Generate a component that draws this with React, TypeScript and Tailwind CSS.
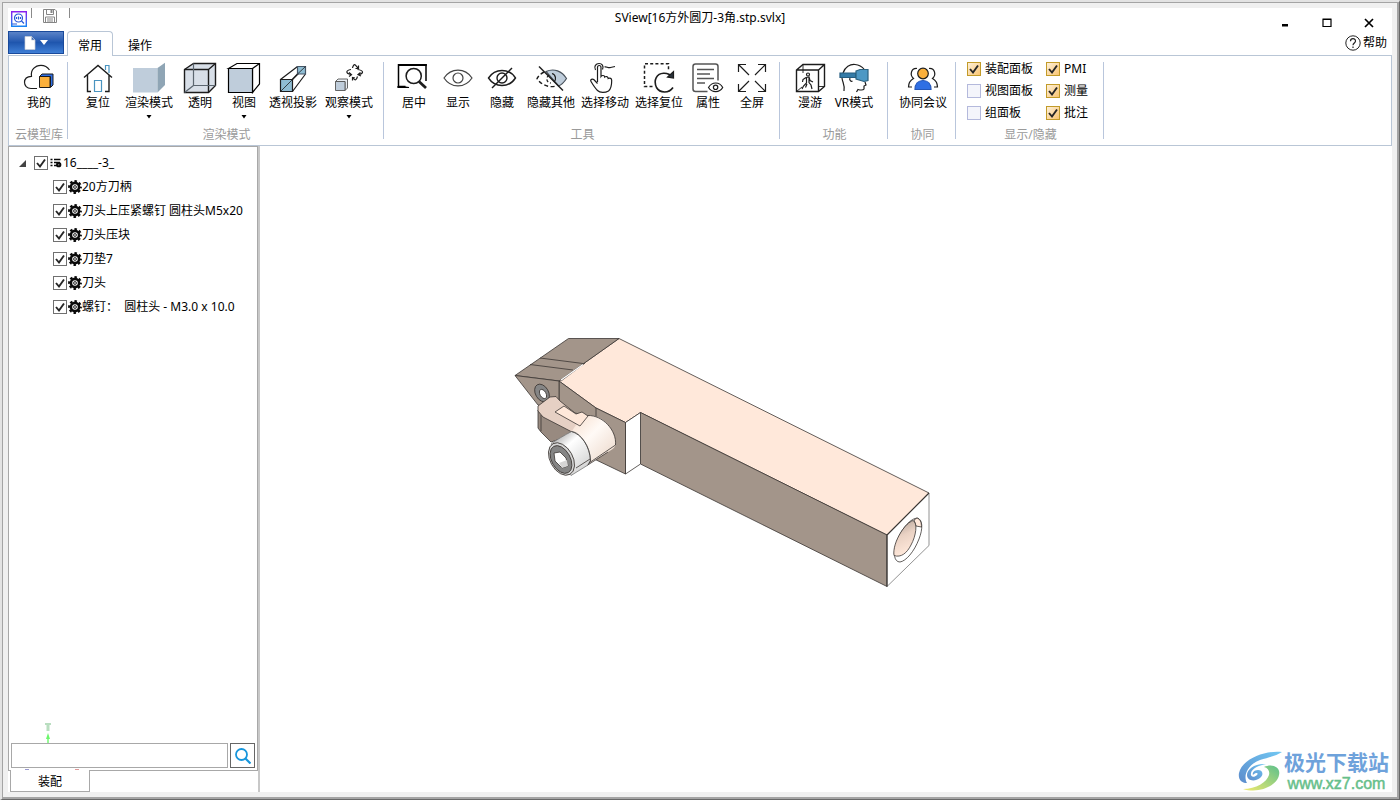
import React from "react";

interface IconProps {
  className?: string;
}

interface ToolItem {
  label: string;
  icon: React.FC;
  width: string;
  menu?: boolean;
}

interface ToolGroup {
  title: string;
  width: string;
  tools: ToolItem[];
}

const NARROW = "w-11";
const WIDE = "w-[54px]";
const WIDER = "w-[58px]";

const Glyph: React.FC<{ children: React.ReactNode }> = ({ children }) => (
  <svg
    viewBox="0 0 32 32"
    className="w-8 h-8 overflow-visible"
    fill="none"
    stroke="#1c1c1c"
    strokeWidth="1.2"
    aria-hidden="true"
  >
    {children}
  </svg>
);

const CloudIcon = () => (
  <Glyph>
    <path d="M14 26.5H8C3.800 26.500 1.500 23.500 1.500 20.300C1.500 16.500 4 14.500 8.500 14.300C7.500 8 12 3.300 18 3.300C21.500 3.300 24.500 5 26.500 8" />
    <path d="M16.500 14.500L19 12H30V23L27.500 25.500V14.500Z" fill="#2f6fe4" strokeWidth="1" />
    <path d="M16.500 14.500H27V25.500H16.500Z" fill="#fbb03b" strokeWidth="1" />
  </Glyph>
);

const HomeIcon = () => (
  <Glyph>
    <path d="M2 15.500L16 3.500L30 15.500M5.500 13V29.500H9M27 13V29.500H23" strokeWidth="1.400" />
    <path d="M12.500 29.500V18.500H19.500V29.500ZM23.500 8V3.500H27V11" stroke="#4a94c0" />
  </Glyph>
);

const ShadeIcon = () => (
  <Glyph>
    <path d="M0 6H24.500V30.500H0Z" fill="#bfcddb" stroke="none" />
    <path d="M24.500 6L32 .700V23L24.500 30.500Z" fill="#8fa5b5" stroke="none" />
  </Glyph>
);

const TransparentIcon = () => (
  <Glyph>
    <path d="M.500 7.500L9.500 1.500H31.500V23.500L24.500 30.500H.500Z" fill="#d8dfe8" strokeWidth="1.400" />
    <path d="M.500 7.500H24.500V30.500M24.500 7.500L31.500 1.500" strokeWidth="1.400" />
    <path d="M9.500 1.500V23.500H31.500M9.500 23.500L.500 30.500" stroke="#5c6670" />
  </Glyph>
);

const ViewCubeIcon = () => (
  <Glyph>
    <path d="M.500 6.500L9 1.500H31.500V22L24.500 30.500V6.500Z" fill="#fff" stroke="#000" />
    <path d="M.500 6.500H24.500V30.500H.500Z" fill="#bfcddb" stroke="#000" />
    <path d="M24.500 6.500L31.500 1.500" stroke="#000" />
  </Glyph>
);

const PerspectiveIcon = () => (
  <Glyph>
    <path d="M3.500 17.500L20.500 4.500M15.500 17.500L28.500 4.500M15.500 29.500L28.500 12M3.500 29.500L20.500 12" />
    <path d="M20.500 4.500H28.500V12H20.500Z" fill="#8fbdd3" stroke="#456" />
    <path d="M3.500 17.500H15.500V29.500H3.500Z" fill="#8fbdd3" />
    <path d="M3.500 29.500L15.500 17.500M20.500 12L28.500 4.500" strokeWidth=".8" />
  </Glyph>
);

const OrbitIcon = () => (
  <Glyph>
    <path d="M2.500 19.500L5 17H14.500V26L12 28.500V19.500Z" fill="#e9eef4" stroke="#555" strokeWidth=".9" />
    <path d="M2.500 19.500H12V28.500H2.500Z" fill="#bfcddb" stroke="#555" strokeWidth=".9" />
    <path d="M18 12.500C12.500 11.500 12.500 8.500 18 7.500M24.500 7.500C31 8.500 31 11.500 25.500 12.500M19.500 6C20 3.500 21 2.300 22 2.700L25 6M24.500 14.500C23.500 18 22 19 20 16" />
    <path d="M16 10.500L18.500 12.700L16 14.500M27.500 10.500L25 12.700L28 14M25.500 3.500V6.500H22.500M19.500 18.500V15.500L22 16" />
  </Glyph>
);

const CenterIcon = () => (
  <Glyph>
    <path d="M.500 2V24.500H7.500M28 2V19" stroke="#000" strokeWidth="1.500" />
    <path d="M0 3H28.700" stroke="#000" strokeWidth="2" />
    <path d="M0 24.500H4L11 25.500H0Z" fill="#000" stroke="#000" />
    <circle cx="15.700" cy="14" r="7.600" strokeWidth="1.500" />
    <path d="M21 19.500L28 26" strokeWidth="2.800" />
  </Glyph>
);

const EyeIcon = () => (
  <Glyph>
    <path d="M2 16C9 5.500 23 5.500 30 16C23 26.500 9 26.500 2 16Z" stroke="#444" />
    <circle cx="16" cy="16" r="5" stroke="#444" />
  </Glyph>
);

const HideIcon = () => (
  <Glyph>
    <path d="M2.500 16C9 6 23 6 29.500 16C23 26 9 26 2.500 16Z" strokeWidth="1.400" />
    <circle cx="16" cy="16" r="5" strokeWidth="1.400" />
    <path d="M6 26L26 6" strokeWidth="1.400" />
  </Glyph>
);

const HideOthersIcon = () => (
  <Glyph>
    <path d="M11 9.500C19 6 27 9 31.500 16.500C29 20.500 26 23 23.500 24Z" fill="#bfcddb" stroke="#49525b" />
    <path d="M9 10C6 11.500 3.500 14 2 16.500C6 23 14 26 21 24" strokeDasharray="4 2.500" strokeWidth="1.400" />
    <path d="M17 11.500C21 12.500 21.500 18 19 20" />
    <path d="M14 13C10 16 12 21 16 21" strokeDasharray="3 2" />
    <path d="M4 4.500L28 28.500" strokeWidth="1.500" />
  </Glyph>
);

const DragIcon = () => (
  <Glyph>
    <path d="M8.500 20V5.500C8.500 2.800 12 2.800 12 5.500V14.500C13 13 15.500 13.200 15.700 15C17 14 19 14.500 19.200 16.500C21 15.500 22.700 16.500 22.700 18.500C22.700 24 22 27 19.500 29C16 31 11 31 8.500 28.500C6 26 3.500 22 2 19.500C.800 17.500 3.500 16.500 5 17.800L8.500 21.500" />
    <path d="M6.500 8C4.500 4.500 7 1.500 10 1.500C13 1.500 15 3.800 13.500 7.500M15.500 5C17.500 4 19 6.500 21.500 5.500L26 4.500" />
  </Glyph>
);

const ResetSelectionIcon = () => (
  <Glyph>
    <path d="M9.500 24.500H1.500V1.800H25.500V9" strokeDasharray="3 2.200" strokeWidth="1.500" />
    <path d="M30 25.500C26 31.500 17 31.500 13.500 25.500C10 18 14 11.500 20.500 11.200C24 11 27 12 29.500 15" strokeWidth="1.600" />
    <path d="M30.500 9.500V16L24.500 15Z" fill="#2a333b" />
  </Glyph>
);

const PropertiesIcon = () => (
  <Glyph>
    <path d="M15.500 29.500H3.500C2 29.500 1 28.500 1 27V4.500C1 3 2 2 3.500 2H23.500C25 2 26 3 26 4.500V18.500" stroke="#555" strokeWidth="1.500" />
    <path d="M5 7.500H22M5 12H18M5 16.500H22M5 21H13" stroke="#555" strokeWidth="1.500" />
    <path d="M16.500 25.500C20 19.500 27.500 19.500 30.700 25.500C27.500 31 20 31 16.500 25.500Z" fill="#fff" />
    <circle cx="23.600" cy="25.300" r="2.200" />
  </Glyph>
);

const FullscreenIcon = () => (
  <Glyph>
    <path d="M2.500 10V2.500H10M22 2.500H29.500V10M29.500 22V29.500H22M10 29.500H2.500V22M2.500 2.500L13 13M29.500 2.500L19 13M2.500 29.500L13 19M29.500 29.500L19 19" />
  </Glyph>
);

const RoamIcon = () => (
  <Glyph>
    <path d="M2.500 8L9 2.500H30.500V24.500L24.500 29.500H2.500ZM2.500 8H24.500V29.500M24.500 8L30.500 2.500" strokeWidth="1.400" />
    <path d="M9 2.500V11M2.500 29.500L8 25M24.500 24.500H30.500" strokeWidth=".9" />
    <circle cx="14" cy="12.500" r="1.500" />
    <path d="M12 15.500L15 15L16 18.500L19 20M12 15.500L9 17.500L8.500 20M12.500 16V21L9.500 24L8 27M15 16V20.500L17 23L18 27M13 22L11.500 25.500" />
  </Glyph>
);

const VrIcon = () => (
  <Glyph>
    <path d="M5 11C7 5 12 2 17 2.500C21.500 3 24 4.500 26 7M4 16C4.500 21 7 22 6 29M27 20L28 23L26 24V27C25 28.500 22 28 20 27.500L18.500 30M12 16C11 18 13 20 14.500 19" />
    <path d="M2 11H18V15.500H2Z" fill="#347ba7" stroke="#235c80" />
    <path d="M18 9L22 7.500H30V18.500L26 19.500L18 17Z" fill="#4d98c4" stroke="#2b617f" />
  </Glyph>
);

const MeetingIcon = () => (
  <Glyph>
    <path d="M10 6.500C4 6 2.500 13 6.500 16.500C3 18.500 1.500 21 1.500 25H5M22 6.500C28 6 29.500 13 25.500 16.500C29 18.500 30.500 21 30.500 25H27" />
    <circle cx="16" cy="11.500" r="5.300" fill="#fbb03b" />
    <path d="M8 27.500C8 22 11 18.500 16 18.500C21 18.500 24 22 24 27.500Z" fill="#2f6fe4" stroke="#2456b8" />
  </Glyph>
);

const toolGroups: ToolGroup[] = [
  {
    title: "云模型库",
    width: "w-[59px]",
    tools: [{ label: "我的", icon: CloudIcon, width: NARROW }],
  },
  {
    title: "渲染模式",
    width: "w-[316px]",
    tools: [
      { label: "复位", icon: HomeIcon, width: NARROW },
      { label: "渲染模式", icon: ShadeIcon, width: WIDER, menu: true },
      { label: "透明", icon: TransparentIcon, width: NARROW },
      { label: "视图", icon: ViewCubeIcon, width: NARROW, menu: true },
      { label: "透视投影", icon: PerspectiveIcon, width: WIDE },
      { label: "观察模式", icon: OrbitIcon, width: WIDER, menu: true },
    ],
  },
  {
    title: "工具",
    width: "w-[396px]",
    tools: [
      { label: "居中", icon: CenterIcon, width: NARROW },
      { label: "显示", icon: EyeIcon, width: NARROW },
      { label: "隐藏", icon: HideIcon, width: NARROW },
      { label: "隐藏其他", icon: HideOthersIcon, width: WIDE },
      { label: "选择移动", icon: DragIcon, width: WIDE },
      { label: "选择复位", icon: ResetSelectionIcon, width: WIDE },
      { label: "属性", icon: PropertiesIcon, width: NARROW },
      { label: "全屏", icon: FullscreenIcon, width: NARROW },
    ],
  },
  {
    title: "功能",
    width: "w-[108px]",
    tools: [
      { label: "漫游", icon: RoamIcon, width: NARROW },
      { label: "VR模式", icon: VrIcon, width: NARROW },
    ],
  },
  {
    title: "协同",
    width: "w-[68px]",
    tools: [{ label: "协同会议", icon: MeetingIcon, width: WIDE }],
  },
];

const panelToggles = [
  { label: "装配面板", checked: true },
  { label: "PMI", checked: true },
  { label: "视图面板", checked: false },
  { label: "测量", checked: true },
  { label: "组面板", checked: false },
  { label: "批注", checked: true },
];

const parts = [
  "20方刀柄",
  "刀头上压紧螺钉 圆柱头M5x20",
  "刀头压块",
  "刀垫7",
  "刀头",
  "螺钉：  圆柱头 - M3.0 x 10.0",
];

const RibbonGroup: React.FC<{
  title: string;
  width: string;
  children: React.ReactNode;
}> = ({ title, width, children }) => (
  <section
    className={`${width} shrink-0 my-1.5 flex flex-col justify-between border-r border-[#b9c6dc]`}
  >
    {children}
    <h2 className="pl-0.5 text-center text-[#9a9a9a] leading-2 whitespace-nowrap">{title}</h2>
  </section>
);

const ToolButton: React.FC<{ tool: ToolItem }> = ({ tool }) => {
  const Icon = tool.icon;
  return (
    <button
      type="button"
      className={`${tool.width} flex flex-col items-center whitespace-nowrap hover:bg-[#e8f1fb]`}
    >
      <Icon />
      <span className="mt-px leading-4">{tool.label}</span>
      {tool.menu && (
        <svg viewBox="0 0 6 4" className="mt-1 w-1.5 h-1" aria-hidden="true">
          <path d="M.500 0H5.500L3 3.500Z" />
        </svg>
      )}
    </button>
  );
};

const Tick: React.FC<IconProps> = ({ className = "" }) => (
  <svg
    viewBox="0 0 14 14"
    className={`pointer-events-none [grid-area:1/1] w-3.5 h-3.5 invisible peer-checked:visible ${className}`}
    fill="none"
    stroke="#262626"
    strokeWidth="1.900"
    aria-hidden="true"
  >
    <path d="M3 7L6 10.500L11 3.500" />
  </svg>
);

const PanelToggle: React.FC<{ label: string; checked: boolean }> = ({ label, checked }) => (
  <label className="flex items-center gap-1 h-[22px] whitespace-nowrap">
    <span className="grid">
      <input
        type="checkbox"
        defaultChecked={checked}
        className="peer [grid-area:1/1] appearance-none w-3.5 h-3.5 border border-[#b4b9dc] bg-[#f4f5fb] checked:border-[#c29b29] checked:bg-linear-to-br checked:from-[#fdf0d8] checked:to-[#f9c470]"
      />
      <Tick />
    </span>
    {label}
  </label>
);

const TreeCheckbox: React.FC<{ label: string; icon: React.ReactNode }> = ({ label, icon }) => (
  <label className="flex items-center h-6 whitespace-pre">
    <span className="grid mr-px">
      <input
        type="checkbox"
        defaultChecked
        className="peer [grid-area:1/1] appearance-none w-3.5 h-3.5 border border-[#707070] bg-white"
      />
      <Tick />
    </span>
    {icon}
    {label}
  </label>
);

const GearIcon = () => (
  <svg viewBox="0 0 14 14" className="w-3.5 h-3.5" fill="none" stroke="#0a0a0a" aria-hidden="true">
    <circle cx="7" cy="7" r="5.800" strokeWidth="2.200" strokeDasharray="2.500 2.055" strokeDashoffset="1.250" />
    <circle cx="7" cy="7" r="4.100" strokeWidth="2.600" />
    <circle cx="7" cy="7" r="1.500" stroke="#444" fill="#bbb" />
  </svg>
);

const AssemblyIcon = () => (
  <svg viewBox="0 0 12 10" className="mx-px w-3 h-2.5" fill="none" stroke="#0a0a0a" aria-hidden="true">
    <path d="M.500 1.500H2.500M.500 4.500H2.500M.500 7.500H2.500M4 1.500H10.500M4 4.500H10M4 7.500H7" strokeWidth="1.600" />
    <circle cx="8.700" cy="6.700" r="1.700" strokeWidth="1.900" fill="#777" />
  </svg>
);

const ToolModel = () => (
  <svg
    viewBox="510 330 425 262"
    className="absolute top-[184px] left-[250px] w-[425px] h-[262px]"
    stroke="#3b3633"
    strokeWidth=".8"
    strokeLinejoin="round"
    role="img"
    aria-label="16方外圆刀"
  >
    <defs>
      <linearGradient id="shank" x1="0" y1="0" x2="1" y2="1">
        <stop offset="0" stopColor="#f6d9c6" />
        <stop offset=".45" stopColor="#fffaf6" />
        <stop offset="1" stopColor="#e9d3c4" />
      </linearGradient>
      <linearGradient id="head" x1="0" y1="0" x2=".8" y2="1">
        <stop offset="0" stopColor="#8d8d8d" />
        <stop offset=".4" stopColor="#fff" />
        <stop offset="1" stopColor="#cfcfcf" />
      </linearGradient>
      <linearGradient id="bore" x1="0" y1="0" x2=".3" y2="1">
        <stop offset="0" stopColor="#a99b92" />
        <stop offset=".5" stopColor="#ead2c4" />
        <stop offset="1" stopColor="#ffe8da" />
      </linearGradient>
    </defs>

    {/* Holder body */}
    <path d="M619 338.500L929 493L887 535L640.500 412.500L625.500 422.500L596 408L559 381Z" fill="#ffe8da" />
    <path d="M640.500 412.500L887 535V586.500L640.500 464Z" fill="#a3958a" />
    <path d="M887 535L929 493V545.500L887 586.500Z" fill="#fff" stroke="#777" />
    <path d="M887 586.500V535L929 493" fill="none" strokeWidth="1.200" />
    <path d="M625.500 422.500L640.500 412.500V464L625.500 474Z" fill="#fff" />
    <path d="M559 381L596 408L625.500 422.500V474L590 457L559 425Z" fill="#a3958a" />
    <path d="M596 408V430" />

    {/* Cutting insert */}
    <path d="M515 375.500L568.500 338.500H619L559 381Z" fill="#a3958a" />
    <path d="M515 375.500L559 381V412L538 405Z" fill="#a3958a" />
    <path d="M540 358L583 363.500M530 364.500L573 370M561 381L585 363" fill="none" />
    <path d="M561 380L583 364.500" stroke="#fff" strokeWidth="1.200" />
    <ellipse cx="542" cy="393" rx="6.500" ry="9.500" transform="rotate(-30 542 393)" fill="#858585" />
    <ellipse cx="543" cy="394" rx="3" ry="5" transform="rotate(-30 543 394)" fill="#fff" />

    {/* Clamp */}
    <path d="M538 410L543 416L572 431L566 437L551 442L541 432L538 428Z" fill="#988a80" />
    <path d="M541 415V431" />
    <path d="M538 406L550 397L556 396.500L560 401L575 413L588 416L586 423L572 432L543 417L538 411Z" fill="#e6d0c4" />

    {/* Clamp screw */}
    <path d="M572 431C577 423 583 416 590 415.500C602 415 617 430 615.500 445C615 448 611 450 608 452L587 465.500L566 453Z" fill="url(#shank)" stroke="none" />
    <path d="M588 415.500C602 415 617 430 615.500 445L589 463M608 452L587 465.500" fill="none" />
    <path d="M555 412L564 406L576 414L582 412L588 416L580 426Z" fill="#ffe8da" />
    <path d="M551 444C556 440 565 435 571.500 431.500C580 432 590 446 590.500 460L588 465L571 475.500Z" fill="url(#head)" stroke="#777" />
    <path d="M571.500 431.500C581 434 590 446 590.500 461L588 465M576 468L590 459" fill="none" />
    <ellipse cx="561.500" cy="459" rx="11.300" ry="17.500" transform="rotate(-29 561.500 459)" fill="#d5d5d5" />
    <ellipse cx="561" cy="459.500" rx="9.300" ry="15" transform="rotate(-29 561 459.500)" fill="#858585" />
    <path d="M554 453L560 452L566 458L568 466L562 468L555 461Z" fill="#fff" />
    <path d="M559 463L567 460L568 466L562 468Z" fill="#d5d5d5" stroke="none" />

    {/* Bore in the end face */}
    <path d="M917 518C923 519 923 529 919 539C914 552 906 561 900 562C894 562 893 553 896 544C900 531 909 519 917 518Z" fill="#fff" />
    <path d="M914 520L917 518C920 519 921.500 522 921.500 527L916 526Z" fill="#ffe8da" />
    <path d="M913 520.500C918 523 916 536 911 545C907 553 901 558 894 555.500C893 549 896 540 901 532C905 526 909 522 913 520.500Z" fill="url(#bore)" />
  </svg>
);

const Watermark = () => (
  <div className="absolute right-[3px] bottom-0 flex items-end gap-0.5 opacity-90">
    <svg viewBox="0 0 44 42" className="w-11 h-[42px]" aria-hidden="true">
      <defs>
        <linearGradient id="swirl" x1="0" y1="1" x2="1" y2="0">
          <stop offset="0" stopColor="#4b80c7" />
          <stop offset="1" stopColor="#62c2f2" />
        </linearGradient>
        <linearGradient id="leaf" x1="0" y1="1" x2="1" y2="0">
          <stop offset="0" stopColor="#f1e85e" />
          <stop offset="1" stopColor="#4cba80" />
        </linearGradient>
      </defs>
      <path d="M44 2C27 0 4 9 1 23C0 29 3 33 9 33C5 26 9 15 22 10C31 7 38 6 44 2Z" fill="url(#swirl)" />
      <path d="M28 14C17 13 9 19 9 25C9 31 17 32 22 28C26 25 25 20 20 20C16 20 14 23 15 25C18 22 21 23 19 25C16 28 12 27 13 23C14 18 22 15 28 14Z" fill="url(#swirl)" />
      <path d="M5 39C18 39 29 32 31 25C32 21 30 18 26 17C34 13 43 17 41 25C39 36 21 44 5 39Z" fill="url(#leaf)" />
    </svg>
    <div className="-mb-0.5 flex flex-col items-center">
      <span className="font-bold text-[21px] text-[#5f98d8] leading-6">极光下载站</span>
      <span className="font-['Liberation_Sans',sans-serif] text-base text-[#56b97e] leading-5 [-webkit-text-stroke:0.5px_#56b97e]">
        www.xz7.com
      </span>
    </div>
  </div>
);

const TitleBar = () => (
  <header className="grid grid-cols-[1fr_auto_1fr] items-start h-[22px]">
    <div className="flex items-start">
      <svg viewBox="0 0 16 16" className="mt-[3px] ml-[3px] w-4 h-4" fill="none" aria-hidden="true">
        <defs>
          <linearGradient id="brand" x1="0" y1="0" x2="0" y2="1">
            <stop offset="0" stopColor="#8a20ee" />
            <stop offset="1" stopColor="#1684f4" />
          </linearGradient>
        </defs>
        <path d="M.700 .700H15.300V15.300H.700Z" stroke="url(#brand)" strokeWidth="1.400" />
        <circle cx="7.500" cy="7" r="4" stroke="#2859d8" strokeWidth="1.200" />
        <path d="M10.500 10L13 12.500M5.500 6V8M7.500 5.500V8.500M9.500 6V8M1 13H6" stroke="#2859d8" strokeWidth="1.200" />
      </svg>
      <span className="ml-1 w-px h-2.5 bg-[#8a8a8a]" />
      <button type="button" aria-label="保存" className="mt-px ml-[11px]">
        <svg viewBox="0 0 14 14" className="w-3.5 h-3.5" fill="none" stroke="#858585" aria-hidden="true">
          <path d="M.500 .500H12L13.500 2V13.500H.500ZM3.500 .500V5.500H10.500V.500M2.500 13.500V8H11.500V13.500M4 10H10M4 12H10" />
          <path d="M8.500 1V4" strokeWidth="2" />
        </svg>
      </button>
      <span className="ml-3 w-px h-2.5 bg-[#8a8a8a]" />
    </div>
    <h1 className="leading-5">SView[16方外圆刀-3角.stp.svlx]</h1>
    <div className="flex justify-end gap-8 mt-2.5 mr-[18px]">
      <button type="button" aria-label="最小化">
        <svg viewBox="0 0 10 10" className="w-2.5 h-2.5" aria-hidden="true">
          <path d="M2 6H8V8.500H2Z" />
        </svg>
      </button>
      <button type="button" aria-label="最大化">
        <svg viewBox="0 0 10 10" className="w-2.5 h-2.5" fill="none" stroke="#000" aria-hidden="true">
          <path d="M1 1.500H9V8.500H1ZM.500 1H9.500" strokeWidth="1.200" />
        </svg>
      </button>
      <button type="button" aria-label="关闭">
        <svg viewBox="0 0 10 10" className="w-2.5 h-2.5" fill="none" stroke="#000" aria-hidden="true">
          <path d="M1 1L9 9M9 1L1 9" strokeWidth="1.700" />
        </svg>
      </button>
    </div>
  </header>
);

const TabStrip = () => (
  <nav className="flex items-end h-[25px]">
    <button
      type="button"
      aria-label="文件"
      className="flex items-center justify-center gap-1 mb-px w-14 h-[23px] border border-[#1a4a9b] bg-linear-to-b from-[#5a83c8] via-[#1f56ae] to-[#3f7fd6]"
    >
      <svg viewBox="0 0 12 14" className="w-3 h-3.5" fill="#fff" stroke="#c9cdd6" strokeWidth=".7" aria-hidden="true">
        <path d="M1 .500H7.500L11 4V13.500H1ZM7.500 .500V4H11" />
      </svg>
      <svg viewBox="0 0 8 5" className="w-2 h-[5px]" fill="#fff" aria-hidden="true">
        <path d="M0 0H8L4 5Z" />
      </svg>
    </button>
    <button
      type="button"
      className="z-10 -mb-px ml-[3px] pt-1 w-[46px] h-[25px] rounded-t border border-b-0 border-[#b9c6d6] bg-white"
    >
      常用
    </button>
    <button type="button" className="pt-1.5 w-[54px] h-6">
      操作
    </button>
    <a href="#help" className="flex items-center gap-0.5 mb-0.5 ml-auto mr-[5px] leading-5">
      <svg viewBox="0 0 16 16" className="w-4 h-4" fill="none" stroke="#222" aria-hidden="true">
        <circle cx="8" cy="8" r="7.200" />
        <path d="M5.500 6.200C5.500 2.800 10.500 2.800 10.500 6C10.500 8 8 8 8 10.300M8 11.500V13" strokeWidth="1.200" />
      </svg>
      帮助
    </a>
  </nav>
);

const AssemblyPanel = () => (
  <aside className="flex flex-col w-[252px] shrink-0 border-r-2 border-[#c8c8c8]">
    <div className="flex flex-col flex-1 border border-[#a8a8a8]">
      <ul className="pt-1">
        <li>
          <div className="flex items-center pl-2.5">
            <button type="button" aria-label="折叠" className="mr-2">
              <svg viewBox="0 0 7 7" className="w-[7px] h-[7px]" fill="#444" aria-hidden="true">
                <path d="M7 0V7H0Z" />
              </svg>
            </button>
            <TreeCheckbox label="16____-3_" icon={<AssemblyIcon />} />
          </div>
          <ul className="pl-11">
            {parts.map((part) => (
              <li key={part}>
                <TreeCheckbox label={part} icon={<GearIcon />} />
              </li>
            ))}
          </ul>
        </li>
      </ul>
      <svg viewBox="0 0 12 20" className="mt-auto ml-[33px] w-3 h-5" aria-hidden="true">
        <path d="M3 0H9V2H7.500V8H4.500V2H3Z" fill="#b9dec0" />
        <path d="M6 10L8 16H6.700V20H5.300V16H4Z" fill="#6cf76c" />
      </svg>
      <form className="flex gap-0.5 px-0.5">
        <input
          type="text"
          aria-label="搜索零件"
          className="flex-1 min-w-0 h-[25px] border border-[#a8a8a8] bg-white px-1 outline-none"
        />
        <button
          type="button"
          aria-label="搜索"
          className="flex items-center justify-center w-[25px] h-[25px] border border-[#666]"
        >
          <svg viewBox="0 0 16 16" className="w-4 h-4" fill="none" stroke="#1796dc" strokeWidth="1.800" aria-hidden="true">
            <circle cx="6.500" cy="6.500" r="5.500" />
            <path d="M10.500 10.500L15.500 15.500" strokeWidth="2.200" />
          </svg>
        </button>
      </form>
      <div className="flex gap-[46px] pt-px pl-4">
        <span className="w-1 h-px bg-[#9a9ad0]" />
        <span className="w-1 h-px bg-[#e09a9a]" />
      </div>
    </div>
    <button
      type="button"
      className="-mt-px ml-0.5 pt-0.5 w-20 h-[22px] border border-t-0 border-[#a8a8a8] bg-white leading-5"
    >
      装配
    </button>
  </aside>
);

export default function App() {
  return (
    <div className="h-screen border-t-2 border-l-2 border-r border-b border-t-[#e3e3e3] border-l-[#e3e3e3] border-r-[#696969] border-b-[#696969] font-['Noto_Sans','Noto_Sans_CJK_SC',sans-serif] text-xs text-black">
      <div className="h-full border border-r-2 border-b-2 border-[#a4a4a4] bg-[#f0f0f0] p-[5px]">
        <div className="flex flex-col h-full bg-white overflow-hidden">
          <TitleBar />
          <TabStrip />
          <div className="flex shrink-0 h-[91px] border border-[#b9c6d6]">
            {toolGroups.map((group) => (
              <RibbonGroup key={group.title} title={group.title} width={group.width}>
                <div className="flex items-start pl-2">
                  {group.tools.map((tool) => (
                    <ToolButton key={tool.label} tool={tool} />
                  ))}
                </div>
              </RibbonGroup>
            ))}
            <RibbonGroup title="显示/隐藏" width="w-[148px]">
              <div className="grid grid-cols-[79px_auto] -mt-1 pl-[11px]">
                {panelToggles.map((toggle) => (
                  <PanelToggle key={toggle.label} {...toggle} />
                ))}
              </div>
            </RibbonGroup>
          </div>
          <div className="flex flex-1 min-h-0">
            <AssemblyPanel />
            <main className="relative flex-1 overflow-hidden bg-white">
              <ToolModel />
              <Watermark />
            </main>
          </div>
        </div>
      </div>
    </div>
  );
}
